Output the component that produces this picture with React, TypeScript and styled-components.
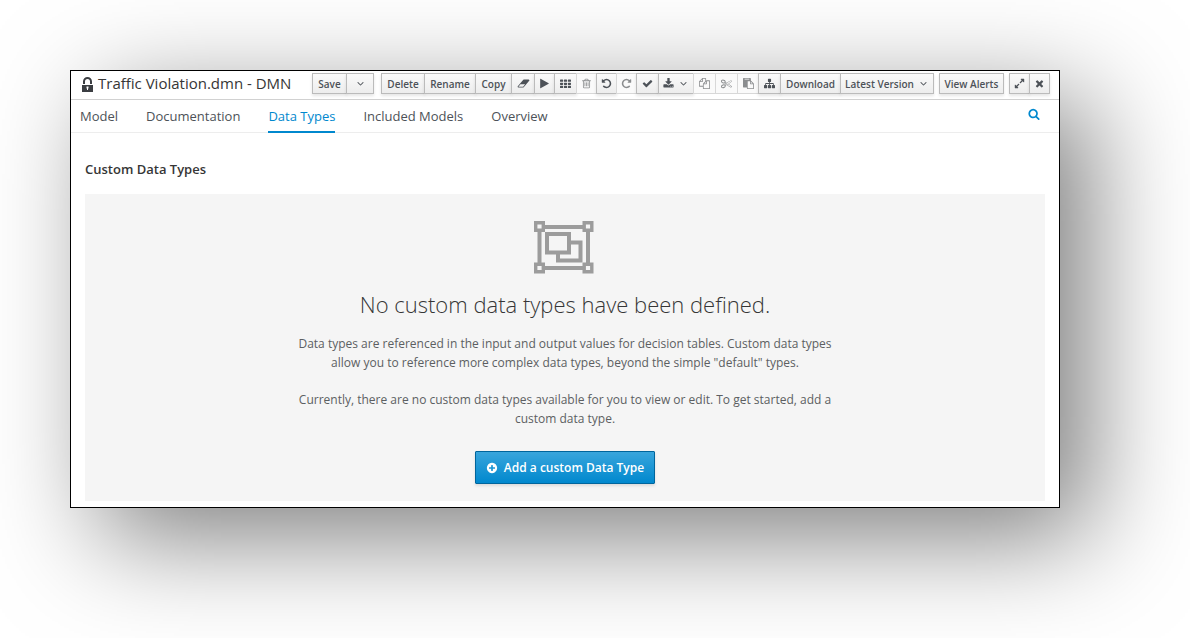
import React from "react";
import styled, { createGlobalStyle, css } from "styled-components";

const GlobalStyle = createGlobalStyle`
  * { box-sizing: border-box; }
  body {
    margin: 0;
    background: #fff;
    color: #363636;
    font-family: "Open Sans", "Noto Sans", sans-serif;
    font-size: 13px;
  }
`;

const glyphs = {
  eraser: "M960 1408l336-384h-768l-336 384h768zm1013-1077q15 34 9.5 71.5t-30.5 65.500l-896 1024q-38 44-96 44h-768q-38 0-69.500-20.500t-47.500-54.500q-15-34-9.500-71.500t30.500-65.500l896-1024q38-44 96-44h768q38 0 69.500 20.500t47.500 54.500z",
  play: "M1576 927l-1328 738q-23 13-39.500 3t-16.500-36v-1472q0-26 16.500-36t39.500 3l1328 738q23 13 23 31t-23 31z",
  grid: "M96 256h320q96 0 96 96v160q0 96-96 96h-320q-96 0-96-96v-160q0-96 96-96zM736 256h320q96 0 96 96v160q0 96-96 96h-320q-96 0-96-96v-160q0-96 96-96zM1376 256h320q96 0 96 96v160q0 96-96 96h-320q-96 0-96-96v-160q0-96 96-96zM96 768h320q96 0 96 96v160q0 96-96 96h-320q-96 0-96-96v-160q0-96 96-96zM736 768h320q96 0 96 96v160q0 96-96 96h-320q-96 0-96-96v-160q0-96 96-96zM1376 768h320q96 0 96 96v160q0 96-96 96h-320q-96 0-96-96v-160q0-96 96-96zM96 1280h320q96 0 96 96v160q0 96-96 96h-320q-96 0-96-96v-160q0-96 96-96zM736 1280h320q96 0 96 96v160q0 96-96 96h-320q-96 0-96-96v-160q0-96 96-96zM1376 1280h320q96 0 96 96v160q0 96-96 96h-320q-96 0-96-96v-160q0-96 96-96z",
  trash: "M704 736v576q0 14-9 23t-23 9h-64q-14 0-23-9t-9-23v-576q0-14 9-23t23-9h64q14 0 23 9t9 23zm256 0v576q0 14-9 23t-23 9h-64q-14 0-23-9t-9-23v-576q0-14 9-23t23-9h64q14 0 23 9t9 23zm256 0v576q0 14-9 23t-23 9h-64q-14 0-23-9t-9-23v-576q0-14 9-23t23-9h64q14 0 23 9t9 23zm128 724v-948h-896v948q0 22 7 40.500t14.500 27 10.500 8.500h832q3 0 10.500-8.500t14.500-27 7-40.500zm-672-1076h448l-48-117q-7-9-17-11h-317q-10 2-17 11zm928 32v64q0 14-9 23t-23 9h-96v948q0 83-47 143.500t-113 60.500h-832q-66 0-113-58.500t-47-141.500v-952h-96q-14 0-23-9t-9-23v-64q0-14 9-23t23-9h309l70-167q15-37 54-63t79-26h320q40 0 79 26t54 63l70 167h309q14 0 23 9t9 23z",
  undo: "M1664 896q0 156-61 298t-164 245-245 164-298 61q-172 0-327-72.500t-264-204.500q-7-10-6.500-22.500t8.500-20.500l137-138q10-9 25-9 16 2 23 12 73 95 179 147t225 52q104 0 198.500-40.500t163.500-109.500 109.500-163.500 40.500-198.500-40.500-198.500-109.500-163.500-163.500-109.500-198.500-40.500q-98 0-188 35.500t-160 101.500l137 138q31 30 14 69-17 40-59 40h-448q-26 0-45-19t-19-45v-448q0-42 40-59 39-17 69 14l130 129q107-101 244.500-156.500t284.500-55.500q156 0 298 61t245 164 164 245 61 298z",
  check: "M1671 566q0 40-28 68l-724 724-136 136q-28 28-68 28t-68-28l-136-136-362-362q-28-28-28-68t28-68l136-136q28-28 68-28t68 28l294 295 656-657q28-28 68-28t68 28l136 136q28 28 28 68z",
  download: "M1344 1344q0-26-19-45t-45-19-45 19-19 45 19 45 45 19 45-19 19-45zm256 0q0-26-19-45t-45-19-45 19-19 45 19 45 45 19 45-19 19-45zm128-224v320q0 40-28 68t-68 28h-1472q-40 0-68-28t-28-68v-320q0-40 28-68t68-28h465l135 136q58 56 136 56t136-56l136-136h464q40 0 68 28t28 68zm-325-569q17 41-14 70l-448 448q-18 19-45 19t-45-19l-448-448q-31-29-14-70 17-39 59-39h256v-448q0-26 19-45t45-19h256q26 0 45 19t19 45v448h256q42 0 59 39z",
  files: "M1696 384q40 0 68 28t28 68v1216q0 40-28 68t-68 28h-960q-40 0-68-28t-28-68v-288h-544q-40 0-68-28t-28-68v-672q0-40 20-88t48-76l408-408q28-28 76-48t88-20h416q40 0 68 28t28 68v328q68-40 128-40h416zm-544 213l-299 299h299v-299zm-640-384l-299 299h299v-299zm196 647l316-316v-416h-384v416q0 40-28 68t-68 28h-416v640h512v-256q0-40 20-88t48-76zm956 804v-1152h-384v416q0 40-28 68t-68 28h-416v640h896z",
  scissors: "M960 896q26 0 45 19t19 45-19 45-45 19-45-19-19-45 19-45 45-19zm300 64l507 398q28 20 25 56-5 35-35 51l-128 64q-13 7-29 7-17 0-31-8l-690-387-110 66q-8 4-12 5 14 49 10 97-7 77-56 147.500t-132 123.500q-132 84-277 84-136 0-222-78-90-84-79-207 7-76 56-147t131-124q132-84 278-84 83 0 151 31 9-13 22-22l122-73-122-73q-13-9-22-22-68 31-151 31-146 0-278-84-82-53-131-124t-56-147q-5-59 15.500-113t63.500-93q85-79 222-79 145 0 277 84 83 52 132 123t56 148q4 48-10 97 4 1 12 5l110 66 690-387q14-8 31-8 16 0 29 7l128 64q30 16 35 51 3 36-25 56zm-681-260q46-42 21-108t-106-117q-92-59-192-59-74 0-113 36-46 42-21 108t106 117q92 59 192 59 74 0 113-36zm-85 745q81-51 106-117t-21-108q-39-36-113-36-100 0-192 59-81 51-106 117t21 108q39 36 113 36 100 0 192-59zm178-613l96 58v-11q0-36 33-56l14-8-79-44-26 26q-3 3-10 11t-12 12q-2 2-4 3.500t-3 2.500zm224 224l96 32 736-576-128-64-768 431v113l-160 96 9 8q2 2 7 6 4 4 11 12t11 12l26 26zm704 416l128-64-520-408-177 138q-2 3-13 7z",
  paste: "M768 1664h896v-640h-416q-40 0-68-28t-28-68v-416h-384v1152zm256-1440v-64q0-13-9.500-22.500t-22.500-9.500h-704q-13 0-22.500 9.500t-9.500 22.500v64q0 13 9.500 22.500t22.500 9.500h704q13 0 22.500-9.500t9.500-22.500zm256 672h299l-299-299v299zm512 128v672q0 40-28 68t-68 28h-960q-40 0-68-28t-28-68v-160h-544q-40 0-68-28t-28-68v-1344q0-40 28-68t68-28h1088q40 0 68 28t28 68v328q21 13 36 28l408 408q28 28 48 76t20 88z",
  sitemap: "M1792 1248v320q0 40-28 68t-68 28h-320q-40 0-68-28t-28-68v-320q0-40 28-68t68-28h96v-192h-512v192h96q40 0 68 28t28 68v320q0 40-28 68t-68 28h-320q-40 0-68-28t-28-68v-320q0-40 28-68t68-28h96v-192h-512v192h96q40 0 68 28t28 68v320q0 40-28 68t-68 28h-320q-40 0-68-28t-28-68v-320q0-40 28-68t68-28h96v-192q0-52 38-90t90-38h512v-192h-96q-40 0-68-28t-28-68v-320q0-40 28-68t68-28h320q40 0 68 28t28 68v320q0 40-28 68t-68 28h-96v192h512q52 0 90 38t38 90v192h96q40 0 68 28t28 68z",
  close: "M1490 1322q0 40-28 68l-136 136q-28 28-68 28t-68-28l-294-294-294 294q-28 28-68 28t-68-28l-136-136q-28-28-28-68t28-68l294-294-294-294q-28-28-28-68t28-68l136-136q28-28 68-28t68 28l294 294 294-294q28-28 68-28t68 28l136 136q28 28 28 68t-28 68l-294 294 294 294q28 28 28 68z",
  angle: "M1395 736q0 13-10 23l-466 466q-10 10-23 10t-23-10l-466-466q-10-10-10-23t10-23l50-50q10-10 23-10t23 10l393 393 393-393q10-10 23-10t23 10l50 50q10 10 10 23z",
  search: "M1216 832q0-185-131.500-316.500t-316.500-131.500-316.500 131.500-131.500 316.500 131.500 316.500 316.500 131.500 316.500-131.500 131.500-316.500zm512 832q0 52-38 90t-90 38q-54 0-90-38l-343-342q-179 124-399 124-143 0-273.500-55.500t-225-150-150-225-55.500-273.500 55.500-273.500 150-225 225-150 273.500-55.500 273.500 55.500 225 150 150 225 55.500 273.500q0 220-124 399l343 343q37 37 37 90z",
  plus: "M1344 960v-128q0-26-19-45t-45-19h-256v-256q0-26-19-45t-45-19h-128q-26 0-45 19t-19 45v256h-256q-26 0-45 19t-19 45v128q0 26 19 45t45 19h256v256q0 26 19 45t45 19h128q26 0 45-19t19-45v-256h256q26 0 45-19t19-45zm320-64q0 209-103 385.500t-279.500 279.500-385.500 103-385.500-103-279.500-279.500-103-385.500 103-385.500 279.500-279.500 385.500-103 385.500 103 279.500 279.500 103 385.500z",
  expand: "M883 1056q0 13-10 23l-332 332 144 144q19 19 19 45t-19 45-45 19h-448q-26 0-45-19t-19-45v-448q0-26 19-45t45-19 45 19l144 144 332-332q10-10 23-10t23 10l114 114q10 10 10 23zm781-864v448q0 26-19 45t-45 19-45-19l-144-144-332 332q-10 10-23 10t-23-10l-114-114q-10-10-10-23t10-23l332-332-144-144q-19-19-19-45t19-45 45-19h448q26 0 45 19t19 45z",
};

type GlyphName = keyof typeof glyphs;

const Svg = styled.svg<{ $flip?: boolean }>`
  display: block;
  flex: none;
  fill: currentColor;
  overflow: visible;
  ${(p) => p.$flip && css`transform: scaleX(-1);`}
`;

function Glyph({ name, size = 11, flip }: { name: GlyphName; size?: number; flip?: boolean }) {
  const wide = name === "eraser";
  return (
    <Svg
      $flip={flip}
      width={wide ? size + 2 : size}
      height={size}
      viewBox={wide ? "0 0 2048 1792" : "0 0 1792 1792"}
      aria-hidden="true"
    >
      <path d={glyphs[name]} />
    </Svg>
  );
}

const Window = styled.main`
  margin: 70px 130px 130px 70px;
  padding-bottom: 6px;
  border: 1px solid #000;
  background: #fff;
  box-shadow: 30px 30px 100px rgba(0, 0, 0, 0.5);
`;

const TitleBar = styled.header`
  display: flex;
  align-items: flex-start;
  justify-content: space-between;
  height: 29px;
  padding: 2px 9px 0 10px;
  border-bottom: 1px solid #d1d1d1;
`;

const Title = styled.h1`
  display: flex;
  gap: 4px;
  margin: 0;
  font-size: 15px;
  font-weight: 400;
  line-height: 20px;
  white-space: nowrap;
`;

const LockIcon = styled.svg`
  width: 13px;
  height: 15px;
  margin-top: 4px;
  fill: #3b3e42;
`;

const Toolbar = styled.div`
  display: flex;
  gap: 5px;
`;

const ButtonGroup = styled.div<{ $spaced?: boolean }>`
  display: flex;
  margin-right: ${(p) => (p.$spaced ? "2px" : "0")};
`;

const ToolButton = styled.button<{ $width: number }>`
  display: flex;
  align-items: center;
  justify-content: center;
  gap: 4px;
  width: ${(p) => p.$width}px;
  height: 21px;
  margin-left: -1px;
  padding: 0;
  border: 1px solid #bbb;
  background: linear-gradient(#fafafa, #ededed);
  box-shadow: 0 2px 3px rgba(3, 3, 3, 0.1);
  color: #4d5258;
  font: 600 10px/18px "Open Sans", sans-serif;
  white-space: nowrap;

  &:first-child { margin-left: 0; }

  &:disabled {
    border-color: #d8d8d8;
    background: #fafafa;
    box-shadow: none;
    color: #8b8d8f;
  }
`;

const Tabs = styled.nav`
  display: flex;
  align-items: stretch;
  gap: 28px;
  height: 33px;
  padding: 0 19px 0 9px;
  border-bottom: 1px solid #ededed;
`;

const Tab = styled.a<{ $active?: boolean }>`
  height: 33px;
  border-bottom: 2px solid ${(p) => (p.$active ? "#0088ce" : "transparent")};
  color: ${(p) => (p.$active ? "#0088ce" : "#4d5258")};
  font-size: 13px;
  line-height: 32px;
  text-decoration: none;
  white-space: nowrap;
`;

const SearchButton = styled.button`
  align-self: flex-start;
  margin: 8px 0 0 auto;
  padding: 0;
  border: 0;
  background: none;
  color: #0088ce;
`;

const Heading = styled.h2`
  margin: 27px 14px 15px;
  font-size: 13px;
  font-weight: 600;
  line-height: 19px;
`;

const EmptyState = styled.section`
  display: flex;
  flex-direction: column;
  align-items: center;
  margin: 0 14px;
  padding: 27px 20px 17px;
  background: #f5f5f5;
  text-align: center;
`;

const EmptyIcon = styled.svg`
  width: 62px;
  height: 53px;
  fill: none;
  stroke: #9c9c9c;
  stroke-width: 4;
`;

const EmptyTitle = styled.h3`
  margin: 15px 0;
  font-size: 22px;
  font-weight: 300;
  line-height: 30px;
`;

const EmptyText = styled.p`
  max-width: 540px;
  margin: 0 0 18px;
  color: #5c5f62;
  font-size: 12px;
  line-height: 19px;
`;

const PrimaryButton = styled.button`
  display: flex;
  align-items: center;
  gap: 6px;
  height: 33px;
  margin-top: 5px;
  padding: 0 10px;
  border: 1px solid #00659c;
  border-radius: 1px;
  background: linear-gradient(#39a5dc, #0088ce);
  box-shadow: 0 2px 3px rgba(3, 3, 3, 0.1);
  color: #fff;
  font: 600 12px/19px "Open Sans", sans-serif;
`;

type Tool = { label: string; width: number; text?: boolean; icon?: GlyphName; menu?: boolean; flip?: boolean; disabled?: boolean };

const groups: { spaced?: boolean; tools: Tool[] }[] = [
  {
    spaced: true,
    tools: [
      { label: "Save", width: 35, text: true },
      { label: "Save options", width: 28, menu: true },
    ],
  },
  {
    tools: [
      { label: "Delete", width: 44, text: true },
      { label: "Rename", width: 52, text: true },
      { label: "Copy", width: 37, text: true },
      { label: "Clear", width: 24, icon: "eraser" },
      { label: "Run", width: 21, icon: "play" },
      { label: "Grid", width: 23, icon: "grid" },
      { label: "Remove", width: 21, icon: "trash", disabled: true },
      { label: "Undo", width: 21, icon: "undo" },
      { label: "Redo", width: 21, icon: "undo", flip: true, disabled: true },
      { label: "Validate", width: 23, icon: "check" },
      { label: "Export", width: 36, icon: "download", menu: true },
      { label: "Copy selection", width: 23, icon: "files", disabled: true },
      { label: "Cut selection", width: 23, icon: "scissors", disabled: true },
      { label: "Paste selection", width: 22, icon: "paste", disabled: true },
      { label: "Layout", width: 23, icon: "sitemap" },
      { label: "Download", width: 61, text: true },
      { label: "Latest Version", width: 94, text: true, menu: true },
    ],
  },
  { tools: [{ label: "View Alerts", width: 65, text: true }] },
  {
    tools: [
      { label: "Maximize", width: 21, icon: "expand" },
      { label: "Close", width: 21, icon: "close" },
    ],
  },
];

const tabs = ["Model", "Documentation", "Data Types", "Included Models", "Overview"];

export default function App() {
  return (
    <>
      <GlobalStyle />
      <Window>
        <TitleBar>
          <Title>
            <LockIcon viewBox="0 0 13 15" aria-hidden="true">
              <path
                fillRule="evenodd"
                d="M2 7V4.500a4.500 4.500 0 0 1 9 0V7H9V4.500a2.500 2.500 0 0 0-5 0V7zM1 8h11v7H1zM5.500 9.500v2h.5v1.500h1v-1.500h.5v-2z"
              />
            </LockIcon>
            Traffic Violation.dmn - DMN
          </Title>
          <Toolbar>
            {groups.map((group) => (
              <ButtonGroup key={group.tools[0].label} $spaced={group.spaced}>
                {group.tools.map((tool) => (
                  <ToolButton
                    key={tool.label}
                    type="button"
                    $width={tool.width}
                    disabled={tool.disabled}
                    aria-label={tool.text ? undefined : tool.label}
                  >
                    {tool.text && tool.label}
                    {tool.icon && <Glyph name={tool.icon} flip={tool.flip} />}
                    {tool.menu && <Glyph name="angle" />}
                  </ToolButton>
                ))}
              </ButtonGroup>
            ))}
          </Toolbar>
        </TitleBar>
        <Tabs>
          {tabs.map((tab) => (
            <Tab key={tab} href="#" $active={tab === "Data Types"}>
              {tab}
            </Tab>
          ))}
          <SearchButton type="button" aria-label="Search">
            <Glyph name="search" size={12} />
          </SearchButton>
        </Tabs>
        <Heading>Custom Data Types</Heading>
        <EmptyState>
          <EmptyIcon viewBox="0 0 62 53" aria-hidden="true">
            <path d="M11 6H49M11 47H49M5.500 11V42M54 11V42" />
            <path
              strokeWidth="3.400"
              d="M1.700 1.700H9.300V9.300H1.700zM50.200 1.700H57.800V9.300H50.200zM1.700 43.200H9.300V50.800H1.700zM50.200 43.200H57.800V50.800H50.200z"
            />
            <path d="M13 13H35V31.500H13zM36 21.500H46.500V39.500H24V32" />
          </EmptyIcon>
          <EmptyTitle>No custom data types have been defined.</EmptyTitle>
          <EmptyText>
            Data types are referenced in the input and output values for decision tables. Custom data types allow
            you to reference more complex data types, beyond the simple "default" types.
          </EmptyText>
          <EmptyText>
            Currently, there are no custom data types available for you to view or edit. To get started, add a
            custom data type.
          </EmptyText>
          <PrimaryButton type="button">
            <Glyph name="plus" size={12} />
            Add a custom Data Type
          </PrimaryButton>
        </EmptyState>
      </Window>
    </>
  );
}
